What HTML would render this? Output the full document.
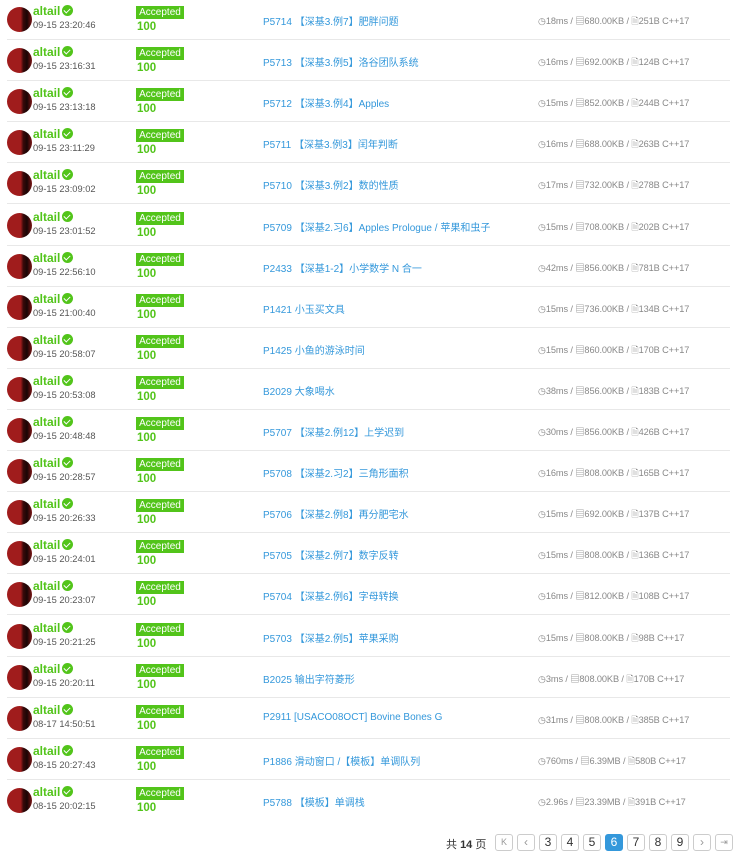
<!DOCTYPE html>
<html><head><meta charset="utf-8"><style>
*{margin:0;padding:0;box-sizing:border-box}
body{width:735px;height:854px;background:#fff;font-family:"Liberation Sans","Noto Sans CJK SC",sans-serif;position:relative;overflow:hidden}
.r{position:absolute;left:7px;width:723px;height:41.1px;border-bottom:1px solid #e8e8e8}
.av{position:absolute;left:0;top:8px;width:25px;height:25px;border-radius:50%;background:linear-gradient(90deg,#a01c1c 0 55%,#3a0a0a 65%,#1a0505 80%,#7a1515 100%)}
.nm{position:absolute;left:26px;top:5px;font-size:12px;font-weight:bold;color:#52c41a}
.ck{display:inline-block;width:11px;height:11px;border-radius:50%;background:#52c41a;vertical-align:-1px;margin-left:2px;position:relative}
.ck:after{content:"";position:absolute;left:3px;top:2px;width:3px;height:5px;border:solid #fff;border-width:0 1.6px 1.6px 0;transform:rotate(45deg)}
.tm{position:absolute;left:26px;top:21px;font-size:9.3px;color:#555}
.ac{position:absolute;left:129px;top:7px;width:48px;height:13px;background:#52c41a;color:#fff;font-size:10px;line-height:13px;text-align:center}
.sc{position:absolute;left:130px;top:22px;font-size:11.5px;font-weight:bold;color:#52c41a}
.pb{position:absolute;left:256px;top:14px;font-size:10px;color:#3498db}
.st{position:absolute;left:531px;top:14px;font-size:9.2px;color:#888;letter-spacing:-0.1px}
.pg{position:absolute;top:834px;width:18px;height:17px;border:1px solid #ccc;border-radius:3px;font-size:12px;text-align:center;line-height:15px;color:#333}
.pg.a{background:#3498db;border-color:#3498db;color:#fff}
</style></head><body>
<div id="rows"></div>
<script>
var d=[["09-15 23:20:46","P5714 【深基3.例7】肥胖问题","18ms","680.00KB","251B"],
["09-15 23:16:31","P5713 【深基3.例5】洛谷团队系统","16ms","692.00KB","124B"],
["09-15 23:13:18","P5712 【深基3.例4】Apples","15ms","852.00KB","244B"],
["09-15 23:11:29","P5711 【深基3.例3】闰年判断","16ms","688.00KB","263B"],
["09-15 23:09:02","P5710 【深基3.例2】数的性质","17ms","732.00KB","278B"],
["09-15 23:01:52","P5709 【深基2.习6】Apples Prologue / 苹果和虫子","15ms","708.00KB","202B"],
["09-15 22:56:10","P2433 【深基1-2】小学数学 N 合一","42ms","856.00KB","781B"],
["09-15 21:00:40","P1421 小玉买文具","15ms","736.00KB","134B"],
["09-15 20:58:07","P1425 小鱼的游泳时间","15ms","860.00KB","170B"],
["09-15 20:53:08","B2029 大象喝水","38ms","856.00KB","183B"],
["09-15 20:48:48","P5707 【深基2.例12】上学迟到","30ms","856.00KB","426B"],
["09-15 20:28:57","P5708 【深基2.习2】三角形面积","16ms","808.00KB","165B"],
["09-15 20:26:33","P5706 【深基2.例8】再分肥宅水","15ms","692.00KB","137B"],
["09-15 20:24:01","P5705 【深基2.例7】数字反转","15ms","808.00KB","136B"],
["09-15 20:23:07","P5704 【深基2.例6】字母转换","16ms","812.00KB","108B"],
["09-15 20:21:25","P5703 【深基2.例5】苹果采购","15ms","808.00KB","98B"],
["09-15 20:20:11","B2025 输出字符菱形","3ms","808.00KB","170B"],
["08-17 14:50:51","P2911 [USACO08OCT] Bovine Bones G","31ms","808.00KB","385B"],
["08-15 20:27:43","P1886 滑动窗口 /【模板】单调队列","760ms","6.39MB","580B"],
["08-15 20:02:15","P5788 【模板】单调栈","2.96s","23.39MB","391B"]];
var h="";
d.forEach(function(x,i){
h+='<div class="r" style="top:'+(-1+41.1*i)+'px'+(i==19?';border-bottom:none':'')+'"><div class="av"></div><div class="nm">altail<span class="ck"></span></div><div class="tm">'+x[0]+'</div><div class="ac">Accepted</div><div class="sc">100</div><div class="pb">'+x[1]+'</div><div class="st">◷'+x[2]+' / ▤'+x[3]+' / 🗎'+x[4]+' C++17</div></div>';
});
document.getElementById("rows").innerHTML=h;
</script>
<div style="position:absolute;left:446px;top:836px;font-size:11px;color:#333">共 <b>14</b> 页</div>
<div class="pg" style="left:495px;font-size:9px;color:#999">K</div>
<div class="pg" style="left:517px;color:#999">‹</div>
<div class="pg" style="left:539px">3</div>
<div class="pg" style="left:561px">4</div>
<div class="pg" style="left:583px">5</div>
<div class="pg a" style="left:605px">6</div>
<div class="pg" style="left:627px">7</div>
<div class="pg" style="left:649px">8</div>
<div class="pg" style="left:671px">9</div>
<div class="pg" style="left:693px;color:#999">›</div>
<div class="pg" style="left:715px;font-size:9px;color:#999">⇥</div>
</body></html>
